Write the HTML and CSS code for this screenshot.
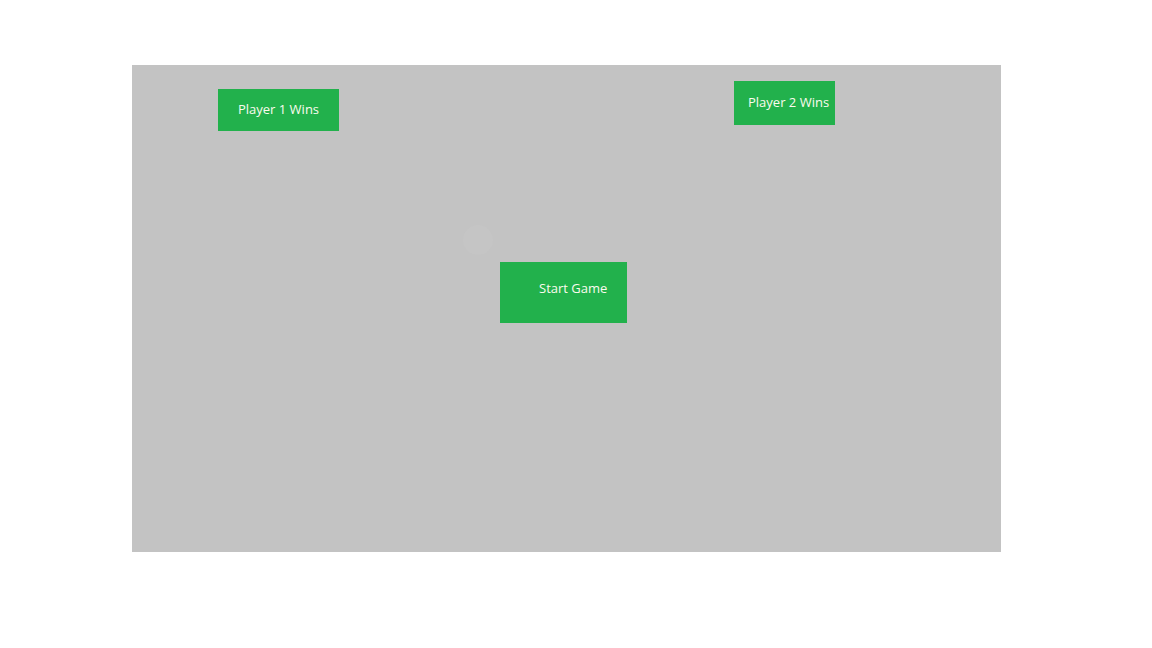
FILE: index.html
```html
<!DOCTYPE html>
<html lang="en">
<head>
<meta charset="utf-8">
<title>Game</title>
<link rel="stylesheet" href="styles.css">
</head>
<body>
<div class="stage">
  <div class="ball"></div>
  <button class="btn p1">Player 1 Wins</button>
  <button class="btn p2">Player 2 Wins</button>
  <button class="btn start">Start Game</button>
</div>
</body>
</html>
```

FILE: styles.css
```css
html, body {
  margin: 0;
  padding: 0;
  background: #ffffff;
}
.stage {
  position: relative;
  margin: 65px 0 0 132px;
  width: 869px;
  height: 487px;
  background: #c3c3c3;
}
.btn {
  position: absolute;
  margin: 0;
  border: 0;
  background: #22b14c;
  color: #fbfbee;
  font-family: "Open Sans", "Noto Sans", sans-serif;
  font-size: 13px;
  line-height: 17px;
  padding: 0;
  white-space: nowrap;
  overflow: hidden;
}
.p1 {
  left: 86px;
  top: 24px;
  width: 121px;
  height: 42px;
  text-align: center;
  padding-bottom: 2px;
}
.p2 {
  left: 602px;
  top: 16px;
  width: 101px;
  height: 44px;
  text-align: left;
  padding: 0 0 2px 14px;
}
.start {
  left: 368px;
  top: 197px;
  width: 127px;
  height: 61px;
  text-align: left;
  padding: 0 0 8px 39px;
}
.ball {
  position: absolute;
  left: 331px;
  top: 160px;
  width: 30px;
  height: 30px;
  border-radius: 50%;
  background: #c5c5c5;
}
```
